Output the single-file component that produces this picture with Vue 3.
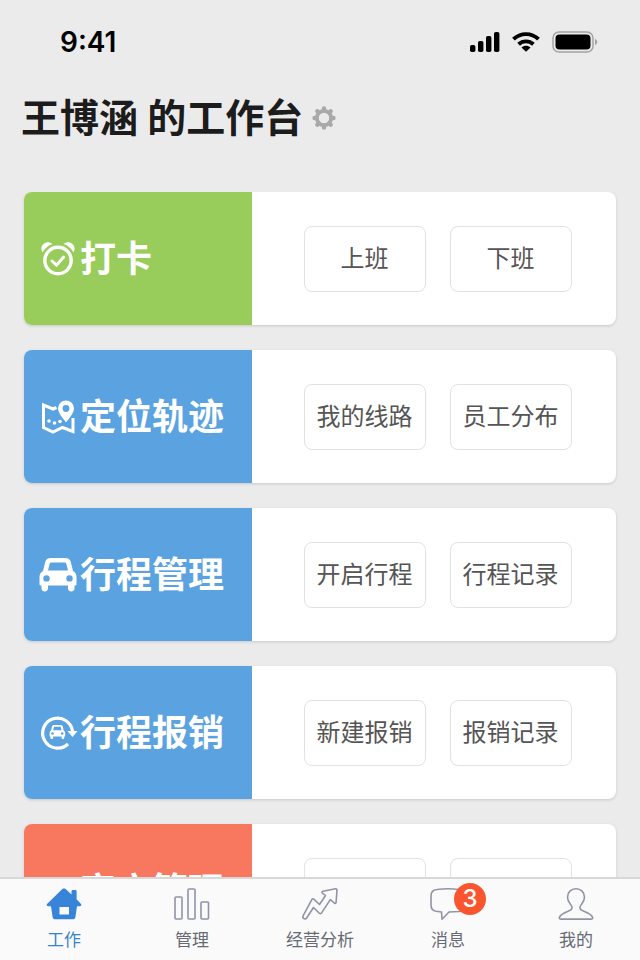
<template>
  <div class="app">
    <header class="status">
      <time class="status__time">9:41</time>
      <div class="status__icons">
        <svg width="30" height="20" viewBox="0 0 30 20">
          <rect x="0" y="13" width="5.400" height="7" rx="1.800" />
          <rect x="8" y="9" width="5.400" height="11" rx="1.800" />
          <rect x="16" y="4" width="5.400" height="16" rx="1.800" />
          <rect x="24" y="0" width="5.400" height="20" rx="1.800" />
        </svg>
        <svg width="28" height="20" viewBox="0 0 28 20">
          <path
            d="M1.500 7.200C8.400 .4 19.600 .4 26.500 7.200M6.600 12.300C10.800 8.400 17.200 8.400 21.400 12.300"
            fill="none"
            stroke="#000"
            stroke-width="3.900"
          />
          <path d="M14 19.800l-4.500-4.400c2.600-2.200 6.400-2.200 9 0z" />
        </svg>
        <svg width="46" height="22" viewBox="0 0 46 22">
          <rect
            x="1"
            y="1"
            width="40"
            height="20"
            rx="6"
            fill="none"
            stroke="#a4a4a4"
            stroke-width="1.500"
          />
          <rect x="3.500" y="3.500" width="35" height="15" rx="4" />
          <path d="M43 8c3 1 3 5 0 6z" fill="#a4a4a4" />
        </svg>
      </div>
    </header>
    <div class="title">
      <h1 class="title__text">王博涵 的工作台</h1>
      <button class="title__settings" aria-label="设置">
        <svg width="24" height="24" viewBox="0 0 24 24" fill="none" stroke="#a9a9a9">
          <circle cx="12" cy="12" r="7.200" stroke-width="3.800" />
          <path
            d="M12 2.500v2M12 19.500v2M2.500 12h2M19.500 12h2M5.300 5.300l1.400 1.400M17.300 17.300l1.400 1.400M5.300 18.700l1.400-1.400M17.300 6.700l1.400-1.400"
            stroke-width="4.400"
            stroke-linecap="round"
          />
        </svg>
      </button>
    </div>
    <main class="list">
      <section v-for="card in cards" :key="card.name" class="card">
        <div class="card__head" :class="'card__head--' + card.color">
          <svg class="card__icon" viewBox="0 0 36 36" fill="none" stroke="#fff">
            <template v-if="card.icon == 'clock'">
              <circle cx="18" cy="19.500" r="13.200" stroke-width="3.400" />
              <path d="M12 20l4.500 4.200 7-8" stroke-width="3" stroke-linecap="round" />
              <path
                d="M2.500 11.500C-1.500 5 6 -2 12.500 3 8 4.500 5 7 2.500 11.500zM33.500 11.500C37.500 5 30 -2 23.500 3c4.500 1.500 7.500 4 10 8.500z"
                fill="#fff"
                stroke="none"
              />
            </template>
            <template v-else-if="card.icon == 'map'">
              <path
                d="M16.500 8.500l-3.500 1.500-9.500-4v22.500l9.500 4.500 9.500-4.500 10.500 4V19"
                stroke-width="3"
              />
              <path
                d="M26 1.500a8 8 0 0 0-8 8c0 5.200 8 13.800 8 13.800s8-8.600 8-13.800a8 8 0 0 0-8-8zm0 4.600a3.400 3.400 0 1 1 0 6.800 3.400 3.400 0 0 1 0-6.800z"
                fill="#fff"
                stroke="none"
              />
              <g fill="#fff" stroke="none">
                <circle cx="9" cy="22" r="1.800" />
                <circle cx="14.500" cy="24" r="1.800" />
                <circle cx="20" cy="22.500" r="1.800" />
              </g>
            </template>
            <path
              v-else-if="card.icon == 'car'"
              :d="carPath"
              fill="#fff"
              fill-rule="evenodd"
              stroke="none"
            />
            <template v-else-if="card.icon == 'refund'">
              <path d="M28 29A15 15 0 1 1 32.600 17" stroke-width="3.200" />
              <path d="M27.500 16h10l-5 6z" fill="#fff" stroke="none" />
              <path
                :d="carPath"
                transform="translate(9.800 9.500) scale(.42)"
                fill="#fff"
                fill-rule="evenodd"
                stroke="none"
              />
            </template>
            <template v-else>
              <circle cx="18" cy="20" r="5" stroke-width="3" />
              <path d="M8 34c1-12 19-12 20 0" stroke-width="3" />
            </template>
          </svg>
          <h2 class="card__name">{{ card.name }}</h2>
        </div>
        <div class="card__body">
          <button v-for="action in card.actions" :key="action" class="card__btn">
            {{ action }}
          </button>
        </div>
      </section>
    </main>
    <nav class="tabs">
      <button
        v-for="tab in tabs"
        :key="tab.name"
        class="tabs__el"
        :class="active == tab.name ? 'tabs__el--active' : ''"
        @click="active = tab.name"
      >
        <span class="tabs__icon">
          <svg
            width="36"
            height="34"
            viewBox="0 0 36 34"
            fill="none"
            stroke="#9194a6"
            stroke-width="1.600"
            stroke-linejoin="round"
          >
            <path
              v-if="tab.icon == 'home'"
              d="M18 1.500c-1 0-1.500.4-2.200 1L1 17c-.8 1 0 2.200 1.200 2.200H5L6.600 30c.2 1.600 1 2.300 2.600 2.300h17.600c1.600 0 2.400-.7 2.600-2.300L31 19.200h2.800c1.200 0 2-1.200 1.200-2.200l-4.400-4.700V4.500c0-1-.5-1.500-1.500-1.500H27c-1 0-1.500.5-1.500 1.500v3l-5.300-5c-.7-.6-1.200-1-2.200-1zM13.500 20h9.500v7.500H13.500z"
              fill="#3884d8"
              fill-rule="evenodd"
              stroke="none"
            />
            <template v-else-if="tab.icon == 'bars'">
              <rect x="1" y="10" width="7" height="22" rx="1" />
              <rect x="14" y="2" width="7" height="30" rx="1" />
              <rect x="27" y="15" width="7.500" height="17" rx="1" />
            </template>
            <path
              v-else-if="tab.icon == 'trend'"
              d="M33.500 1.800L21 4.200c-1.200.3-1.300 1.100-.5 1.900l3 2.400-6 9-5.400-5.200c-.9-.8-1.700-.7-2.300.3L1.200 28.600c-1.500 2.700 1.900 4.600 3.600 2.100L11.500 20.500l5.800 5.700c.8.800 1.700.7 2.300-.3L28.300 12.600l4 3.400c.9.700 1.600.3 1.800-.7L35 3.300c.1-1.100-.5-1.700-1.500-1.500z"
            />
            <path
              v-else-if="tab.icon == 'chat'"
              d="M7 2.500Q18 1 29 2.500Q35 3 35 9V18Q35 24 29 24.500L19 25L12 32.200L11.500 25L6 24.300Q1 23.500 1 18V9Q1 3 7 2.500z"
            />
            <path
              v-else
              d="M18 1.800c-5 0-8.500 3.300-8.500 8.500 0 4.200 2.700 6.400 4 8.500 1.200 2 .5 3.800-1.800 4.800-4.300 1.700-8.900 3-10.300 6.800-.4 1.100 0 1.700 1.200 1.700h30.800c1.200 0 1.600-.6 1.200-1.700-1.400-3.800-6-5.100-10.300-6.800-2.300-1-3-2.800-1.800-4.800 1.300-2.100 4-4.300 4-8.500 0-5.200-3.500-8.500-8.500-8.500z"
            />
          </svg>
          <span v-if="tab.badge" class="tabs__badge">{{ tab.badge }}</span>
        </span>
        <span>{{ tab.name }}</span>
      </button>
    </nav>
  </div>
</template>
<script setup>
import { ref } from "vue";

const active = ref("工作");

const cards = [
  { name: "打卡", icon: "clock", color: "green", actions: ["上班", "下班"] },
  { name: "定位轨迹", icon: "map", color: "blue", actions: ["我的线路", "员工分布"] },
  { name: "行程管理", icon: "car", color: "blue", actions: ["开启行程", "行程记录"] },
  { name: "行程报销", icon: "refund", color: "blue", actions: ["新建报销", "报销记录"] },
  { name: "客户管理", icon: "user", color: "red", actions: ["我的客户", "新增客户"] },
];

const tabs = [
  { name: "工作", icon: "home" },
  { name: "管理", icon: "bars" },
  { name: "经营分析", icon: "trend" },
  { name: "消息", icon: "chat", badge: 3 },
  { name: "我的", icon: "user" },
];

// shared by the trip card and the small car inside the refund icon
const carPath =
  "M11 1h14c3.500 0 5 1.200 5.800 4L33 14c2 1 3.500 3 3.500 6v7c0 1-.5 1.500-1.500 1.500h-.5V31.500c0 4-6.500 4-6.500 0v-3h-20v3c0 4-6.500 4-6.500 0v-3H1c-1 0-1.500-.5-1.500-1.500v-7c0-3 1.500-5 3.500-6l2.200-9C6 2.200 7.500 1 11 1zM11.500 5.500c-1 0-1.500.3-1.800 1.300L8 13.500h20l-1.700-6.700c-.3-1-.8-1.300-1.800-1.300zM6.500 18.200a3.200 3.200 0 1 0 0 6.400 3.200 3.200 0 0 0 0-6.400zM29.500 18.200a3.200 3.200 0 1 0 0 6.400 3.200 3.200 0 0 0 0-6.400z";
</script>
<style>
body {
  margin: 0;
  background: #ebebeb;
}
</style>
<style scoped>
.app {
  display: flex;
  flex-direction: column;
  height: 100vh;
  font-family: Inter, "Noto Sans CJK SC", sans-serif;
}
button {
  padding: 0;
  border: none;
  background: none;
  font-family: inherit;
  cursor: pointer;
}
svg {
  display: block;
  flex-shrink: 0;
  overflow: visible;
}
.status {
  display: flex;
  align-items: center;
  justify-content: space-between;
  height: 84px;
  padding: 0 42px 0 60px;
}
.status__time {
  font-size: 28px;
  font-weight: 600;
}
.status__icons {
  display: flex;
  align-items: center;
  gap: 12px;
}
.title {
  display: flex;
  align-items: center;
  gap: 9px;
  height: 68px;
  padding: 0 21px;
  margin-bottom: 40px;
}
.title__text {
  margin: 0;
  font-size: 39px;
  font-weight: 700;
  line-height: 68px;
  color: #1c1c1c;
}
.list {
  display: flex;
  flex: 1;
  flex-direction: column;
  gap: 25px;
  min-height: 0;
  padding: 0 24px 24px;
  overflow-y: auto;
  scrollbar-width: none;
}
.card {
  display: flex;
  flex-shrink: 0;
  height: 133px;
  border-radius: 8px;
  background: white;
  box-shadow: 0 1px 3px rgba(0, 0, 0, 0.15);
}
.card__head {
  display: flex;
  align-items: center;
  gap: 4px;
  width: 212px;
  padding-left: 16px;
  border-radius: 8px 0 0 8px;
}
.card__head--green {
  background: #98cd5c;
}
.card__head--blue {
  background: #5aa3e0;
}
.card__head--red {
  background: #f7785f;
}
.card__icon {
  width: 36px;
  height: 36px;
}
.card__name {
  margin: 0;
  font-size: 36px;
  font-weight: 700;
  line-height: 52px;
  color: white;
}
.card__body {
  display: flex;
  flex: 1;
  align-items: center;
  justify-content: center;
  gap: 24px;
  padding-left: 7px;
}
.card__btn {
  width: 122px;
  height: 66px;
  padding-bottom: 4px;
  border: 1px solid #e2e2e2;
  border-radius: 8px;
  font-size: 24px;
  color: #555;
}
.tabs {
  display: flex;
  height: 81px;
  border-top: 2px solid #d8d8d8;
  background: #fafafb;
}
.tabs__el {
  display: flex;
  flex: 1;
  flex-direction: column;
  align-items: center;
  gap: 6px;
  padding-top: 8px;
  font-size: 17px;
  line-height: 26px;
  color: #666a73;
}
.tabs__el--active {
  color: #3884c8;
}
.tabs__icon {
  position: relative;
}
.tabs__badge {
  position: absolute;
  top: -4px;
  left: 24px;
  width: 32px;
  height: 32px;
  border-radius: 50%;
  background: #fb5530;
  font-size: 24px;
  font-weight: 500;
  line-height: 32px;
  color: white;
}
</style>
